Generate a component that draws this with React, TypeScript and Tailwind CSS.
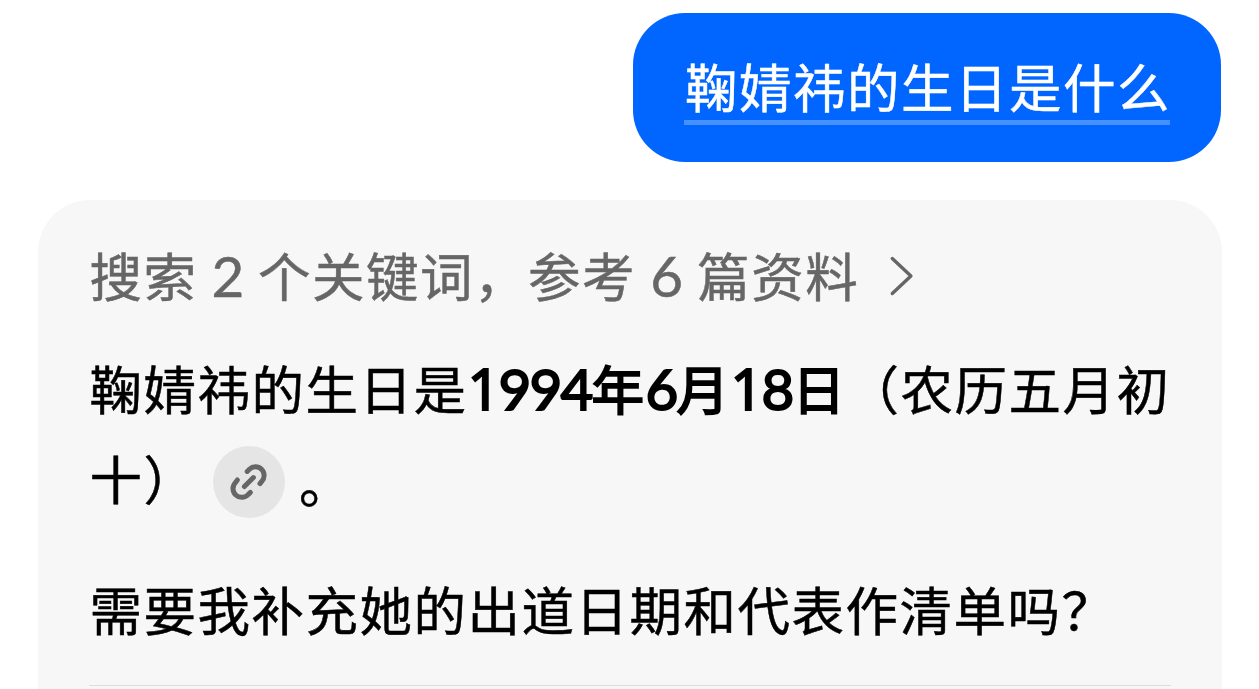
import type { ReactNode } from 'react';

function Digits({ children }: { children: string }) {
  return (
    <>
      {children.split('').map((digit, i) => (
        <span
          key={i}
          className={
            digit === '1'
              ? "inline-block w-[31px] text-center font-['Noto_Sans',sans-serif] text-[57px] leading-none tracking-normal"
              : "inline-block w-[31px] text-center font-['Lato',sans-serif] text-[56.5px] leading-none tracking-normal"
          }
        >
          {digit}
        </span>
      ))}
    </>
  );
}

function Line({ children }: { children: ReactNode }) {
  return <p className="h-[90px] pl-[0.5px] leading-[90px] whitespace-nowrap">{children}</p>;
}

function ChevronIcon() {
  return (
    <svg className="mt-[4px] ml-[30px] h-[42px] w-[26px]" viewBox="0 0 26 42" fill="none" stroke="currentColor" strokeWidth="3.4" strokeLinecap="round" strokeLinejoin="round">
      <path d="M3.3 3.5 21.9 21 3.3 38.5" />
    </svg>
  );
}

function LinkIcon() {
  return (
    <svg className="h-10 w-10" viewBox="0 0 40 40" fill="none" stroke="currentColor" strokeWidth="5" strokeLinecap="round">
      <path d="M18.2 9.4 20.4 7.2a8.7 8.7 0 0 1 12.3 12.3L31 21.6" />
      <path d="M8.4 18 6.4 20.6a8.7 8.7 0 0 0 12.7 12L21.4 30.4" />
      <path d="M15.4 24.6 24.4 15.6" />
    </svg>
  );
}

export default function App() {
  return (
    <main className="h-[689px] w-[1259px] overflow-hidden bg-white pt-[13px] pr-[37px] pl-[38px] font-['Noto_Sans_CJK_SC',sans-serif] text-[52.5px] tracking-[1.5px] text-black [-webkit-text-stroke:0.5px_currentColor]">
      <div className="flex justify-end pr-px">
        <div className="h-[149px] w-[588px] rounded-[52px] bg-[#0066ff] px-[51px] pt-[36px]">
          <div className="h-[76px] border-b-[5px] border-[#4791ff]">
            <p className="pl-px leading-[72px] whitespace-nowrap text-white">鞠婧祎的生日是什么</p>
          </div>
        </div>
      </div>
      <section className="mt-[38px] h-[500px] rounded-t-[52px] bg-[#f7f7f7] px-[51px] pt-[29px]">
        <button type="button" className="flex h-[90px] items-center pl-[0.5px] text-[#666666]">
          <span className="leading-[90px] whitespace-nowrap">
            搜索<span className="mr-[15.6px] ml-[14px]"><Digits>2</Digits></span>个关键词，参考
            <span className="mr-[16px] ml-[14px]"><Digits>6</Digits></span>篇资料
          </span>
          <ChevronIcon />
        </button>
        <div className="mt-[23px]">
          <Line>
            鞠婧祎的生日是
            <strong className="font-normal [-webkit-text-stroke:2px_currentColor]">
              <Digits>1994</Digits>年<Digits>6</Digits>月<Digits>18</Digits>日
            </strong>
            （农历五月初
          </Line>
        </div>
        <div className="flex h-[90px] items-center">
          <span className="w-[108px] pl-[0.5px] leading-[90px]">十）</span>
          <button type="button" className="mt-[10px] ml-[16px] flex h-[72px] w-[72px] items-center justify-center rounded-full bg-[#e5e5e5] text-[#666666]">
            <LinkIcon />
          </button>
          <span className="mt-[6px] ml-[14px] leading-[90px]">。</span>
        </div>
        <div className="mt-[41px]">
          <Line>需要我补充她的出道日期和代表作清单吗？</Line>
        </div>
        <hr className="mt-[32px] border-[#dddddd]" />
      </section>
    </main>
  );
}
